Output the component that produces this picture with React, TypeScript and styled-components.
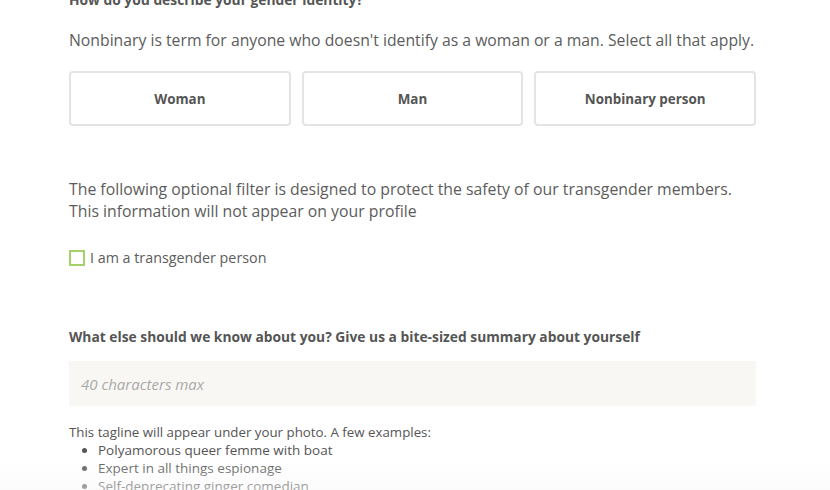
import React from "react";
import styled, { createGlobalStyle } from "styled-components";

const GlobalStyle = createGlobalStyle`
  html, body {
    margin: 0;
    padding: 0;
    background: #fff;
    overflow: hidden;
  }
  body {
    font-family: "Open Sans", "Lato", sans-serif;
    color: #5a5a5a;
  }
`;

const Page = styled.div`
  position: relative;
  width: 830px;
  height: 490px;
  overflow: hidden;
`;

const Form = styled.div`
  width: 687px;
  margin: -9px 0 0 69px;
`;

const Heading = styled.h3<{ $top?: number }>`
  margin: ${(p) => p.$top ?? 0}px 0 0;
  font-size: 13.8px;
  line-height: 18px;
  font-weight: 700;
  color: #555;
`;

const Lead = styled.p`
  margin: 20px 0 0;
  font-size: 15.75px;
  line-height: 22px;
  color: #5c5c5c;
`;

const Options = styled.div`
  display: grid;
  grid-template-columns: repeat(3, 1fr);
  gap: 11px;
  margin-top: 20px;
`;

const Option = styled.button`
  height: 55px;
  background: #fff;
  border: 2px solid #e4e4e4;
  border-radius: 4px;
  font-family: inherit;
  font-size: 13.4px;
  font-weight: 700;
  color: #555;
  cursor: pointer;
`;

const Notice = styled.p`
  margin: 52px 0 0;
  font-size: 15.8px;
  line-height: 22px;
  color: #5c5c5c;
`;

const CheckRow = styled.label`
  display: flex;
  align-items: center;
  gap: 5px;
  margin-top: 26px;
  font-size: 14.3px;
  color: #5c5c5c;
`;

const Box = styled.span`
  width: 16px;
  height: 16px;
  box-sizing: border-box;
  border: 2px solid #a5d16b;
`;

const Tagline = styled.div`
  margin-top: 15px;
  height: 45px;
  background: #f8f7f4;
  display: flex;
  align-items: center;
  padding: 0 12px;
  font-size: 15px;
  font-style: italic;
  color: #aaa;
`;

const Hint = styled.div`
  margin-top: 17px;
  font-size: 13.3px;
  line-height: 18px;
  color: #555;
`;

const Examples = styled.ul`
  margin: 0;
  padding: 0 0 0 29px;
  font-size: 13.5px;
  line-height: 18px;
  color: #555;
`;

const Fade = styled.div`
  position: absolute;
  left: 0;
  right: 0;
  bottom: 0;
  height: 30px;
  background: linear-gradient(to bottom, rgba(248, 248, 248, 0.05), rgba(248, 248, 248, 0.5));
  pointer-events: none;
`;

export default function App() {
  return (
    <Page>
      <GlobalStyle />
      <Form>
        <Heading>How do you describe your gender identity?</Heading>
        <Lead>
          Nonbinary is term for anyone who doesn't identify as a woman or a man. Select all that apply.
        </Lead>
        <Options>
          <Option>Woman</Option>
          <Option>Man</Option>
          <Option>Nonbinary person</Option>
        </Options>
        <Notice>
          The following optional filter is designed to protect the safety of our transgender members.
          <br />
          This information will not appear on your profile
        </Notice>
        <CheckRow>
          <Box />I am a transgender person
        </CheckRow>
        <Heading $top={61}>What else should we know about you? Give us a bite-sized summary about yourself</Heading>
        <Tagline>40 characters max</Tagline>
        <Hint>This tagline will appear under your photo. A few examples:</Hint>
        <Examples>
          <li>Polyamorous queer femme with boat</li>
          <li>Expert in all things espionage</li>
          <li>Self-deprecating ginger comedian</li>
        </Examples>
      </Form>
      <Fade />
    </Page>
  );
}
